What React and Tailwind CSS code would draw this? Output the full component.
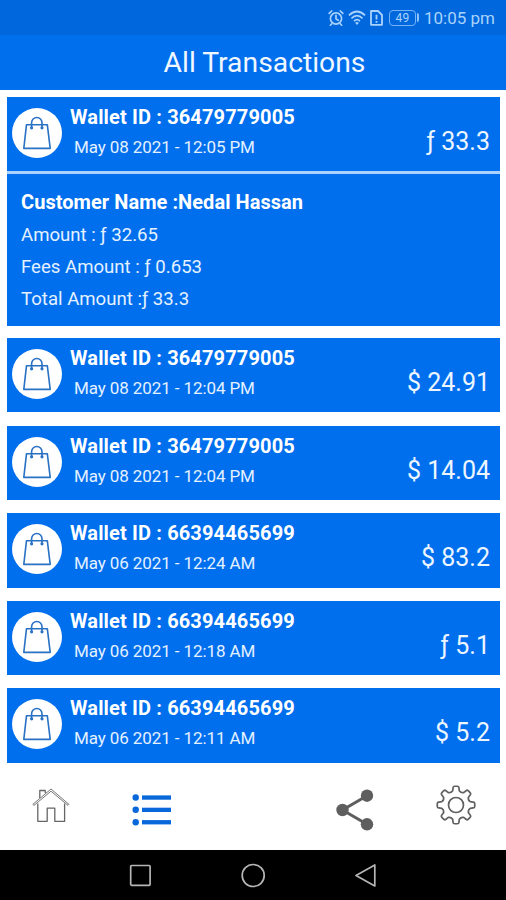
import React from "react";

const others = [
  { id: "36479779005", date: "May 08 2021 - 12:04 PM", amount: "$ 24.91" },
  { id: "36479779005", date: "May 08 2021 - 12:04 PM", amount: "$ 14.04" },
  { id: "66394465699", date: "May 06 2021 - 12:24 AM", amount: "$ 83.2" },
  { id: "66394465699", date: "May 06 2021 - 12:18 AM", amount: "ƒ 5.1" },
  { id: "66394465699", date: "May 06 2021 - 12:11 AM", amount: "$ 5.2" },
];

function StatusBar() {
  return (
    <div className="flex h-[35px] items-center justify-end bg-[#0067dc] pr-[11px] text-[#a9d3fb]">
      <svg className="mr-[4px] h-[18px] w-[16px]" viewBox="0 0 16 18" fill="none" stroke="currentColor" strokeWidth="1.7" strokeLinecap="round">
        <circle cx="8" cy="9.5" r="5.6" />
        <path d="M8 6.3v3.5l2.2 1.5M1.2 4.4 3.7 2M14.8 4.4 12.3 2M3.5 15 2.4 16.2M12.5 15l1.1 1.2" />
      </svg>
      <svg className="mr-[4px] h-[18px] w-[18px]" viewBox="0 0 20 18" preserveAspectRatio="none" fill="none" stroke="currentColor" strokeWidth="1.8">
        <path d="M1 6.4Q10-1.4 19 6.4M3.8 9.4Q10 3.8 16.2 9.4M6.7 12.2Q10 9 13.3 12.2" />
        <path d="M8 13.8Q10 12 12 13.8L10 16Z" fill="currentColor" stroke="none" />
      </svg>
      <svg className="mr-[6px] h-[18px] w-[13px]" viewBox="0 0 13 18" fill="none" stroke="currentColor" strokeWidth="1.8">
        <path d="M1 2h7L12 6v9.8H1Z" strokeLinejoin="round" />
        <path d="M6.5 5.8v4.6M6.5 12v1.7" />
      </svg>
      <div className="flex h-[16px] w-[27px] items-center justify-center rounded-[4px] border border-[#75b3f5] text-[12px] leading-none tracking-[0.3px]">49</div>
      <div className="mr-[5px] ml-px h-[9px] w-[2px] rounded-r-sm bg-[#8dc2f8]" />
      <span className="pt-px text-[17px] leading-none">10:05 pm</span>
    </div>
  );
}

function Bag() {
  return (
    <div className="mt-[11px] ml-[5px] flex size-[50px] shrink-0 items-center justify-center rounded-full bg-white">
      <svg className="h-[36px] w-[30px]" viewBox="0 0 30 36" fill="none" stroke="#2871c4" strokeWidth="1.6" strokeLinejoin="round">
        <path d="M4.5 9.7h20.8l2.9 23.7H1.8Z" />
        <path d="M9.6 13V7.7a5.2 5.2 0 0 1 10.4 0V13" />
        <circle cx="9.6" cy="12.8" r="0.8" />
        <circle cx="20" cy="12.8" r="0.8" />
      </svg>
    </div>
  );
}

function Transaction({ id, date, amount }) {
  return (
    <div className="flex h-[74.4px] bg-[#006fee] text-white">
      <Bag />
      <div className="ml-[8px] flex flex-col pt-[8px] whitespace-nowrap">
        <div className="text-[20px] leading-[24px] font-bold tracking-[0.14px]">Wallet ID : {id}</div>
        <div className="mt-[6px] ml-[4px] text-[17px] leading-[24px] tracking-[-0.1px] text-[#e4f1ff]">{date}</div>
      </div>
      <div className="mt-[30px] mr-[10px] ml-auto text-[25px] leading-[30px] whitespace-nowrap text-[#edf6ff]">{amount}</div>
    </div>
  );
}

function Details() {
  return (
    <div className="mt-[2.6px] h-[152px] bg-[#006fee] pt-[12px] pl-[14px] text-[18.6px] leading-[32px] text-[#e4f1ff]">
      <div className="mb-px text-[20px] font-bold tracking-[0.05px] text-white">Customer Name :Nedal Hassan</div>
      <div>Amount : ƒ 32.65</div>
      <div>Fees Amount : ƒ 0.653</div>
      <div>Total Amount :ƒ 33.3</div>
    </div>
  );
}

function gearOutline() {
  const point = (r, a) => `${(20 + r * Math.cos(a)).toFixed(2)} ${(20 + r * Math.sin(a)).toFixed(2)}`;
  let d = "";
  for (let i = 0; i < 8; i++) {
    const a = (i * Math.PI) / 4 - Math.PI / 2;
    d += `${i ? "L" : "M"}${point(14.6, a - 0.23)}`;
    d += `L${point(17.4, a - 0.17)}Q${point(18.8, a - 0.16)} ${point(18.8, a - 0.08)}`;
    d += `L${point(18.8, a + 0.08)}Q${point(18.8, a + 0.16)} ${point(17.4, a + 0.17)}`;
    d += `L${point(14.6, a + 0.23)}Q${point(12.9, a + Math.PI / 8)} ${point(14.6, a + Math.PI / 4 - 0.23)}`;
  }
  return d + "Z";
}

function TabBar() {
  return (
    <nav className="flex h-[87px] items-start">
      <svg className="mt-[25px] ml-[32px] h-[36px] w-[38px]" viewBox="0 0 38 36" fill="none" stroke="#666" strokeWidth="1.3" strokeLinejoin="round">
        <path d="M5.8 15.5v17.8h9.4V20.2h7.6v13.1h9.8V15.5" />
        <path d="M7.8 10V2.5h5.4V5" />
        <path d="M.8 16.4 19 1l18 15.4-1 1L19 3.2 2 17.4Z" fill="white" strokeWidth="0.9" />
      </svg>
      <svg className="mt-[31px] ml-[62px] h-[34px] w-[40px]" viewBox="0 0 40 34" fill="#0867d9">
        <circle cx="3.7" cy="3.5" r="3.2" /><rect x="10" y="1.4" width="29" height="4.3" />
        <circle cx="3.7" cy="15.8" r="3.2" /><rect x="10" y="13.7" width="29" height="4.3" />
        <circle cx="3.7" cy="28.2" r="3.2" /><rect x="10" y="26.1" width="29" height="4.3" />
      </svg>
      <svg className="mt-[26px] ml-[164px] h-[42px] w-[38px]" viewBox="0 0 38 42" fill="#5e5e5e">
        <path d="M31 6.7 6.5 21 31 35.3" fill="none" stroke="#5e5e5e" strokeWidth="3" />
        <circle cx="31" cy="6.7" r="6.2" />
        <circle cx="6.5" cy="21" r="6.2" />
        <circle cx="31" cy="35.3" r="6.2" />
      </svg>
      <svg className="mt-[22px] ml-[62px] size-[40px]" viewBox="0 0 40 40" fill="none" stroke="#606060" strokeWidth="1.7" strokeLinejoin="round">
        <path d={gearOutline()} />
        <circle cx="20" cy="20" r="7.5" />
      </svg>
    </nav>
  );
}

function SystemBar() {
  return (
    <div className="flex h-[50px] items-center justify-center gap-[88px] bg-black pl-px">
      <svg className="size-[25px]" viewBox="0 0 25 25" fill="none" stroke="#b5b5b5" strokeWidth="1.7">
        <rect x="2.7" y="2.5" width="19.4" height="19.8" rx="1" />
      </svg>
      <svg className="size-[25px]" viewBox="0 0 25 25" fill="none" stroke="#b5b5b5" strokeWidth="1.7">
        <circle cx="12.2" cy="12.5" r="11" />
      </svg>
      <svg className="size-[25px]" viewBox="0 0 25 25" fill="none" stroke="#b5b5b5" strokeWidth="1.7" strokeLinejoin="round">
        <path d="M20.8 2v21L2 12.5Z" />
      </svg>
    </div>
  );
}

export default function App() {
  return (
    <div className="flex h-[900px] w-[506px] flex-col overflow-hidden bg-white [font-family:Roboto,sans-serif]">
      <StatusBar />
      <header className="flex h-[55px] items-center justify-center bg-[#006fee] pt-[2px] pl-[23px] text-[28.3px] leading-none text-[#f0f7ff]">All Transactions</header>
      <main className="h-[673px] pr-[6px] pl-[7px] pt-[7px]">
        <div className="bg-[#a9d2ff]">
          <Transaction id="36479779005" date="May 08 2021 - 12:05 PM" amount="ƒ 33.3" />
          <Details />
        </div>
        <div className="mt-[12px] flex flex-col gap-[13.2px]">
          {others.map((item, i) => <Transaction key={i} {...item} />)}
        </div>
      </main>
      <TabBar />
      <SystemBar />
    </div>
  );
}
